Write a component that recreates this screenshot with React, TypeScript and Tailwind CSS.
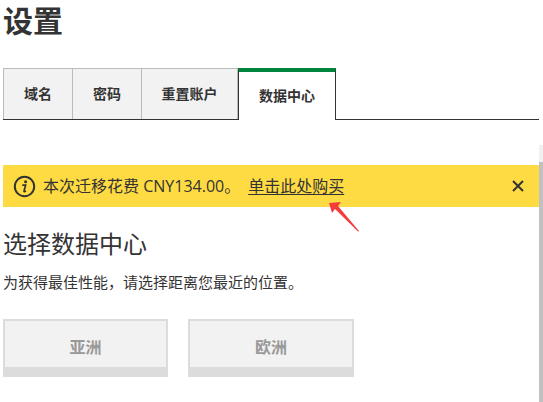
const F = '"Open Sans","Noto Sans CJK SC",sans-serif';
export default function App() {
  return (
    <div className="relative h-[402px] w-[543px] overflow-hidden bg-white pl-[3px] text-[#333]" style={{ fontFamily: F }}>
      <h1 className="h-[68px] pt-[1px] text-[30px] leading-[40px] font-bold">设置</h1>
      <div className="flex h-[52px] w-[536px] border-b border-[#333]">
        <div className="flex h-[51px] w-[70px] items-center justify-center border border-b-0 border-[#bbb] bg-[#f2f2f2] pb-[2px] text-[14px] font-bold">域名</div>
        <div className="flex h-[51px] w-[69px] items-center justify-center border border-b-0 border-l-0 border-[#bbb] bg-[#f2f2f2] pb-[2px] text-[14px] font-bold">密码</div>
        <div className="flex h-[51px] w-[96px] items-center justify-center border border-b-0 border-l-0 border-[#bbb] bg-[#f2f2f2] pb-[2px] text-[14px] font-bold">重置账户</div>
        <div className="-mb-px flex h-[52px] w-[98px] items-center justify-center border-x border-t-[4px] border-x-[#333] border-t-[#00853e] bg-white pb-[2px] text-[14px] font-bold">数据中心</div>
      </div>
      <div className="mt-[45px] flex h-[42px] w-[536px] items-center bg-[#ffdb43] pl-[10px] pr-[15px] text-[16px]">
        <svg width="23" height="23" viewBox="0 0 23 23" className="shrink-0"><circle cx="11.5" cy="11.5" r="9.7" fill="none" stroke="#333" strokeWidth="2" /><circle cx="12.6" cy="6.7" r="1.5" fill="#333" /><path d="M9.3 10.2h3.3l-1.6 6c-.1.6.5.6 1.9-.2" fill="none" stroke="#333" strokeWidth="1.7" /></svg>
        <span className="ml-[7px]">本次迁移花费 CNY134.00。</span>
        <span className="ml-[8px] underline underline-offset-2">单击此处购买</span>
        <svg width="12" height="12" viewBox="0 0 12 12" className="ml-auto"><path d="M1 1l10 10M11 1L1 11" stroke="#333" strokeWidth="2" /></svg>
      </div>
      <h2 className="mt-[20px] text-[24px] leading-[33px]">选择数据中心</h2>
      <p className="mt-[12px] text-[15px] leading-[20px]">为获得最佳性能，请选择距离您最近的位置。</p>
      <div className="mt-[27px] flex gap-[20px]">
        <div className="flex h-[58px] w-[165px] items-center justify-center border-2 border-b-[10px] border-[#dcdcdc] bg-[#f2f2f2] pt-[6px] text-[16px] font-bold text-[#999]">亚洲</div>
        <div className="flex h-[58px] w-[166px] items-center justify-center border-2 border-b-[10px] border-[#dcdcdc] bg-[#f2f2f2] pt-[6px] text-[16px] font-bold text-[#999]">欧洲</div>
      </div>
      <h3 className="mt-[23px] text-[20px] leading-[28px]">选择一个数据中心</h3>
      <div className="absolute top-[145px] right-0 h-[257px] w-[4px] bg-[#f1f1f1]"><div className="mt-[17px] h-[240px] bg-[#c1c1c1]" /></div>
      <svg className="absolute left-[325px] top-[198px]" width="40" height="38" viewBox="0 0 40 38"><path d="M4 5l12-1-3 4 21 25-1 0.5L10 11l-3 4z" fill="#f33c3c" /></svg>
    </div>
  );
}
